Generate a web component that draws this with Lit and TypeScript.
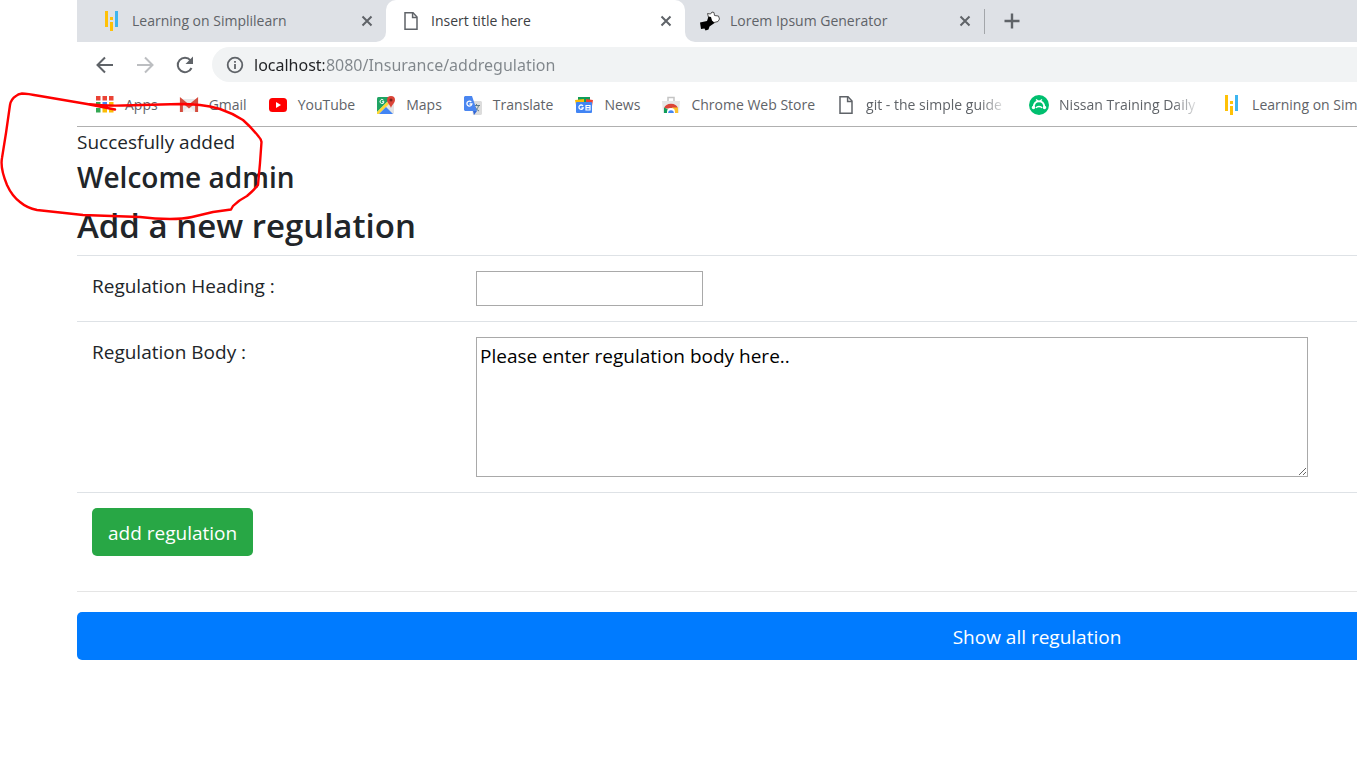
import { LitElement, html, css, svg } from "lit";
import { customElement, state } from "lit/decorators.js";

const pageIcon = html`<svg class="icon" viewBox="0 0 20 20" aria-hidden="true">
  <path d="M4 1.8h8l4 4.2v12.2H4z" fill="#fff" stroke="#5f6368" stroke-width="1.5"/>
  <path d="M11.6 1.8v4.6H16" fill="none" stroke="#5f6368" stroke-width="1.5"/>
</svg>`;

const simplilearnIcon = html`<svg class="icon" viewBox="0 0 20 20" aria-hidden="true">
  <path d="M3 0h3v16H3zM8 11h3v9H8zM8 6h3v3H8z" fill="#ffc107"/>
  <path d="M13 0h3v16h-3z" fill="#3db5f0"/>
</svg>`;

const loremIcon = html`<svg class="icon" viewBox="0 0 20 20" aria-hidden="true">
  <path d="M7.500 2.500l3 .5 1.500-2 2 .5.500 3 4 .5 1 3-1.500 2.500-4 1-3-1-2.500-4z" fill="#fff" stroke="#555" stroke-width="1"/>
  <path d="M0 11.500l7-1.500 1.500-4.500 2.500.5 1 3.500 2.500 2.500-5 3.500-1 3-3 1-1-2-3.500.5z" fill="#000"/>
</svg>`;

const appColors = ["#ea4335", "#ea4335", "#ea4335", "#34a853", "#4285f4", "#fbbc05", "#34a853", "#fbbc05", "#fbbc05"];
const appsIcon = html`<svg class="icon" viewBox="0 0 20 20" aria-hidden="true">
  ${appColors.map((fill, i) => svg`<rect x=${1 + (i % 3) * 6.5} y=${1 + Math.floor(i / 3) * 6} width="4.5" height="4.5" fill=${fill}/>`)}
</svg>`;

const gmailIcon = html`<svg class="icon" viewBox="0 0 20 20" aria-hidden="true">
  <path d="M1 4h18v13H1z" fill="#e8e8e8"/>
  <path d="M4 17l6-6 6 6" fill="#f7f7f7"/>
  <path d="M2.400 17V5.200L10 11.500l7.600-6.300V17" fill="none" stroke="#d54b3d" stroke-width="3"/>
</svg>`;

const youtubeIcon = html`<svg class="icon" viewBox="0 0 20 20" aria-hidden="true">
  <rect x="1" y="3" width="18" height="14" rx="3.500" fill="#f00"/>
  <path d="M8 7l5 3-5 3z" fill="#fff"/>
</svg>`;

const mapsIcon = html`<svg class="icon" viewBox="0 0 20 20" aria-hidden="true">
  <rect x="1" y="2" width="17" height="17" rx="1.500" fill="#e3e3e3"/>
  <path d="M1 3.500Q1 2 2.500 2H16L1 17z" fill="#1fa463"/>
  <path d="M1 17L11 7l2 2L3 19H1z" fill="#fdd835"/>
  <path d="M3 19l7-7 7 7z" fill="#4285f4"/>
  <path d="M15 13C14 9.500 11 8 11 5a4 4 0 0 1 8 0c0 3-3 4.500-4 8z" fill="#db4437"/>
  <circle cx="15" cy="5" r="1.500" fill="#7b231c"/>
  <path d="M7.500 5.200a2 2 0 1 0 .5 1.500H6" fill="none" stroke="#fff" stroke-width="1"/>
</svg>`;

const translateIcon = html`<svg class="icon" viewBox="0 0 20 20" aria-hidden="true">
  <path d="M8 6h10l1 1v12l-1 1h-8z" fill="#dcdcdc"/>
  <path d="M10 10.500h7M13.500 9v1.500M15.500 10.500c-.5 3-2 4-4 5.500M12 12c1 2 2.500 3 4 4" stroke="#607d8b" stroke-width="1" fill="none"/>
  <path d="M10 16h4l-3 4z" fill="#3367d6"/>
  <path d="M1 2l1-1h7l5 15H2l-1-1z" fill="#4a86f0"/>
  <path d="M8.300 7a2.500 2.500 0 1 0 .6 2H6.500" fill="none" stroke="#fff" stroke-width="1.300"/>
</svg>`;

const newsIcon = html`<svg class="icon" viewBox="0 0 20 20" aria-hidden="true">
  <path d="M4 2h12v6H4z" fill="#0f9d58"/>
  <path d="M1 5l9-1v6H2z" fill="#fbbc05"/>
  <path d="M12 4l7 1-1 6h-6z" fill="#ea4335"/>
  <rect x="2" y="7" width="16" height="11" rx="1" fill="#4285f4"/>
  <path d="M9 11a2.200 2.200 0 1 0 .2 2H7.500" fill="none" stroke="#fff" stroke-width="1.300"/>
  <path d="M12 10.500h4v4.500h-4zM12 12.700h4" fill="none" stroke="#fff" stroke-width="1.200"/>
</svg>`;

const storeIcon = html`<svg class="icon" viewBox="0 0 20 20" aria-hidden="true">
  <path d="M7 6V2.500h6V6" fill="none" stroke="#c4c4c4" stroke-width="1.500"/>
  <path d="M1 6h18l-1 12H2z" fill="#e6e6e6"/>
  <path d="M3 13.500a7.300 6.500 0 0 1 14 0z" fill="#db4437"/>
  <path d="M3 12.500L8 15v3H3z" fill="#0f9d58"/>
  <path d="M11 12.500h6V18h-6z" fill="#fbc02d"/>
  <path d="M6 17a4 4 0 0 1 8 0v1H6z" fill="#fff"/>
  <path d="M7.200 18a2.800 2.800 0 0 1 5.600 0z" fill="#4285f4"/>
</svg>`;

const nissanIcon = html`<svg class="icon" viewBox="0 0 20 20" aria-hidden="true">
  <circle cx="10" cy="10" r="10" fill="#00bf6f"/>
  <path d="M4.500 12.500C5 4 15 4 15.500 12.500" fill="none" stroke="#fff" stroke-width="2"/>
  <circle cx="4.500" cy="12.500" r="1.700" fill="#fff"/><circle cx="15.500" cy="12.500" r="1.700" fill="#fff"/>
  <path d="M7 13c1-2 5-2 6 0M9 6L7 4.500M11 6l2-1.500" fill="none" stroke="#fff" stroke-width="1.300"/>
</svg>`;

const closeIcon = html`<svg class="close-icon" viewBox="0 0 12 12" aria-hidden="true">
  <path d="M1.500 1.500l9 9m0-9l-9 9" stroke="#5f6368" stroke-width="2"/>
</svg>`;

const tabs = [
  { title: "Learning on Simplilearn", icon: simplilearnIcon },
  { title: "Insert title here", icon: pageIcon },
  { title: "Lorem Ipsum Generator", icon: loremIcon },
];

const bookmarks = [
  { title: "Apps", icon: appsIcon },
  { title: "Gmail", icon: gmailIcon },
  { title: "YouTube", icon: youtubeIcon },
  { title: "Maps", icon: mapsIcon },
  { title: "Translate", icon: translateIcon },
  { title: "News", icon: newsIcon },
  { title: "Chrome Web Store", icon: storeIcon },
  { title: "git - the simple guide", icon: pageIcon, faded: true },
  { title: "Nissan Training Daily", icon: nissanIcon, faded: true },
  { title: "Learning on Simplilearn", icon: simplilearnIcon },
];

@customElement("browser-chrome")
export class BrowserChrome extends LitElement {
  @state() private active = 1;

  static styles = css`
    :host { display: block; overflow: hidden; border-bottom: 1px solid #b0b0b0; white-space: nowrap; color: #5f6368; font-size: 14px; }
    * { box-sizing: border-box; }
    button { font: inherit; color: inherit; background: none; border: 0; padding: 0; }
    svg { display: block; flex: none; }
    .icon { width: 20px; height: 20px; }
    .tabs { display: flex; height: 42px; }
    .lead { width: 10px; background: #dee1e6; }
    .tab { width: 299px; flex: none; background: #dee1e6; }
    .face { display: flex; align-items: center; height: 100%; padding: 0 11px 1px 15px; }
    .tab.active .face { background: #fff; border-radius: 10px 10px 0 0; color: #3c4043; }
    .tab.before { border-bottom-right-radius: 10px; }
    .tab.after { border-bottom-left-radius: 10px; }
    .title { display: flex; align-items: center; gap: 10px; flex: 1; height: 100%; text-align: left; }
    .close { display: grid; place-items: center; width: 16px; height: 20px; }
    .close-icon { width: 12px; height: 12px; }
    .rest { flex: 1; display: flex; align-items: center; background: #dee1e6; }
    .rule { width: 1px; height: 25px; background: #a3a6aa; }
    .new { padding: 0 19px; }
    .toolbar { display: flex; align-items: center; padding: 5px 0 0 18px; }
    .nav { display: flex; gap: 20px; padding-right: 17px; }
    .omnibox { flex: 1; display: flex; align-items: center; gap: 9px; height: 35px; padding-left: 13px; background: #f1f3f4; border-radius: 18px 0 0 18px; }
    .url { flex: 1; border: 0; padding: 0; outline: 0; font-family: "Noto Sans", sans-serif; font-size: 16px; line-height: 24px; height: 24px; color: #5f6368;
      background: linear-gradient(90deg, #202124 70px, #80868b 70px); -webkit-background-clip: text; background-clip: text; -webkit-text-fill-color: transparent; }
    .bookmarks { display: flex; gap: 21px; height: 44px; align-items: center; padding: 2px 0 0 18px; }
    .bookmark { display: flex; align-items: center; gap: 10px; flex: none; color: inherit; text-decoration: none; line-height: 20px; }
    .faded { width: 142px; overflow: hidden; -webkit-mask-image: linear-gradient(90deg, #000 80%, transparent); mask-image: linear-gradient(90deg, #000 80%, transparent); }
  `;

  private tabClass(i: number) {
    return i === this.active ? "tab active" : i === this.active - 1 ? "tab before" : i === this.active + 1 ? "tab after" : "tab";
  }

  render() {
    return html`
      <div class="tabs">
        <div class="lead"></div>
        ${tabs.map((t, i) => html`<div class=${this.tabClass(i)}>
          <div class="face">
            <button class="title" @click=${() => (this.active = i)}>${t.icon}<span>${t.title}</span></button>
            <button class="close" aria-label="Close ${t.title}">${closeIcon}</button>
          </div>
        </div>`)}
        <div class="rest">
          <div class="rule"></div>
          <button class="new" aria-label="New tab">
            <svg width="16" height="16" viewBox="0 0 16 16"><path d="M8 .500v15M.500 8h15" stroke="#5f6368" stroke-width="2.400"/></svg>
          </button>
        </div>
      </div>
      <div class="toolbar">
        <div class="nav">
          <button aria-label="Back"><svg width="20" height="20" viewBox="0 0 20 20"><path d="M18 10H3M10 2.500L2.500 10l7.500 7.500" fill="none" stroke="#5f6368" stroke-width="2"/></svg></button>
          <button aria-label="Forward"><svg width="20" height="20" viewBox="0 0 20 20"><path d="M2 10h15M10 2.500l7.500 7.500-7.500 7.500" fill="none" stroke="#bcbec1" stroke-width="2"/></svg></button>
          <button aria-label="Reload"><svg width="20" height="20" viewBox="0 0 20 20"><path d="M16.500 13A7.200 7.200 0 1 1 15.500 5.300" fill="none" stroke="#5f6368" stroke-width="2"/><path d="M18 1.500V9h-7.500z" fill="#5f6368"/></svg></button>
        </div>
        <div class="omnibox">
          <svg width="20" height="20" viewBox="0 0 20 20" aria-hidden="true"><circle cx="10" cy="10" r="7.300" fill="none" stroke="#5f6368" stroke-width="1.800"/><path d="M10 9v5M10 6v1.800" stroke="#5f6368" stroke-width="1.800"/></svg>
          <input class="url" type="text" aria-label="Address" .value=${"localhost:8080/Insurance/addregulation"} />
        </div>
      </div>
      <nav class="bookmarks">
        ${bookmarks.map((b) => html`<a class="bookmark" href="#">${b.icon}<span class=${b.faded ? "faded" : ""}>${b.title}</span></a>`)}
      </nav>
    `;
  }
}

@customElement("regulation-page")
export class RegulationPage extends LitElement {
  static styles = css`
    :host { display: block; width: 150%; color: #212529; font-size: 19px; line-height: 30px; }
    * { box-sizing: border-box; }
    h3, h4 { margin: 0 0 8px; padding-top: 2px; font-weight: 600; }
    h4 { font-size: 28px; line-height: 36px; }
    h3 { font-size: 33px; line-height: 42px; }
    table { width: 100%; border-collapse: separate; border-spacing: 0; }
    td { padding: 15px; border-top: 1px solid #dee2e6; vertical-align: top; }
    td:first-child { width: 20%; }
    input, textarea { display: block; font: inherit; color: #000; background: #fff; border: 1px solid #a9a9a9; padding: 3px; margin: 0; }
    input { width: 227px; height: 35px; }
    textarea { width: 832px; height: 140px; }
    button { display: block; font: inherit; color: #fff; border: 0; border-radius: 5px; padding: 10px 16px 8px; }
    .add { background: #28a745; }
    .show { width: 100%; background: #007bff; }
    hr { margin: 20px 0; border: 0; border-top: 1px solid #e5e5e5; }
  `;

  render() {
    return html`
      <div>Succesfully added</div>
      <h4>Welcome admin</h4>
      <h3>Add a new regulation</h3>
      <table>
        <tr>
          <td><label for="heading">Regulation Heading :</label></td>
          <td><input id="heading" type="text" /></td>
        </tr>
        <tr>
          <td><label for="body">Regulation Body :</label></td>
          <td><textarea id="body" .value=${"Please enter regulation body here.."}></textarea></td>
        </tr>
        <tr>
          <td><button class="add">add regulation</button></td>
          <td></td>
        </tr>
      </table>
      <hr />
      <button class="show">Show all regulation</button>
    `;
  }
}

@customElement("app-root")
export class AppRoot extends LitElement {
  static styles = css`
    :host { display: block; position: relative; min-height: 100vh; box-sizing: border-box; padding-left: 77px; overflow: hidden; background: #fff; font-family: "Open Sans", "Noto Sans", sans-serif; }
    .marker { position: absolute; left: 0; top: 0; pointer-events: none; }
  `;

  render() {
    return html`
      <browser-chrome></browser-chrome>
      <regulation-page></regulation-page>
      <svg class="marker" width="270" height="230" viewBox="0 0 270 230" aria-hidden="true">
        <path d="M115 109.500L87 104L40 96Q27 93.500 22 93.500Q18 94 16 96Q11 99 10 105L6 133L2 158Q0 168 7 185Q12 196 20 202Q27 208 37 210L83 215L140 217Q155 219 170 219Q183 219 192 217L213 212L231 209.500L233 206Q239 200 247 196Q254 190 258 185L260 163L261.500 142Q261 139 259 137Q252 128 243 120Q232 113 220 109Q210 106 200 105Q190 104 180 104L123 105.500Q104 106 87 104" fill="none" stroke="#f00" stroke-width="2.400" stroke-linecap="round" stroke-linejoin="round"/>
      </svg>
    `;
  }
}
